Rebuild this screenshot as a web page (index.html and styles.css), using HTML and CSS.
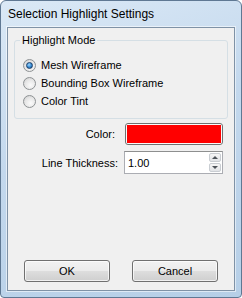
FILE: index.html
```html
<!DOCTYPE html>
<html>
<head>
<meta charset="utf-8">
<title>Selection Highlight Settings</title>
<link rel="stylesheet" href="styles.css">
</head>
<body>

<div class="window">
  <div class="titlebar">Selection Highlight Settings</div>

  <div class="client">

    <fieldset class="group">
      <legend>Highlight Mode</legend>
      <label class="option"><span class="radio checked"></span>Mesh Wireframe</label>
      <label class="option"><span class="radio"></span>Bounding Box Wireframe</label>
      <label class="option"><span class="radio"></span>Color Tint</label>
    </fieldset>

    <div class="fields">
      <span class="label lbl-color">Color:</span>
      <span class="swatch"><span class="fill"></span></span>

      <span class="label">Line Thickness:</span>
      <div class="spin">
        <span class="value">1.00</span>
        <span class="arrows">
          <span class="arrow up"></span>
          <span class="arrow down"></span>
        </span>
      </div>
    </div>

    <div class="buttons">
      <button class="btn">OK</button>
      <button class="btn">Cancel</button>
    </div>

  </div>
</div>

</body>
</html>
```

FILE: styles.css
```css
body { margin: 0; font: 11px "Liberation Sans", Arial, sans-serif; color: #000; background: #fff; }

.window {
  width: 242px; height: 298px; box-sizing: border-box;
  display: flex; flex-direction: column;
  border: 1px solid #5f7893; border-radius: 6px 6px 4px 4px;
  background: linear-gradient(160deg, #dbe9f6 0%, #c3d8ed 45%, #b6cfe7 100%);
}

.titlebar {
  height: 26px; line-height: 26px; padding-left: 7px;
  font-size: 12px; color: #000;
}

.client {
  flex: 1; display: flex; flex-direction: column;
  margin: 0 6px 6px 6px;
  border: 1px solid #7f92a6;
  box-shadow: 0 0 0 1px rgba(255,255,255,0.55);
  background: #f0f0f0;
  padding: 6px 6px 8px 6px;
}

/* group box */
.group {
  margin: 0; padding: 9px 0 8px 8px;
  border: 1px solid #d5dfe5; border-radius: 3px;
}
.group legend { margin-left: -3px; padding: 0 2px; line-height: 13px; }

.option { display: flex; align-items: center; height: 18px; gap: 5px; }

.radio {
  width: 11px; height: 11px; border-radius: 50%;
  border: 1px solid #8e9294;
  background: radial-gradient(circle at 60% 65%, #fbfbfb 0%, #e6e6e6 55%, #c9c9c9 100%);
  display: flex; align-items: center; justify-content: center;
}
.radio.checked::after {
  content: ''; width: 5px; height: 5px; border-radius: 50%;
  border: 1px solid #1b3f6a;
  background: radial-gradient(circle at 40% 35%, #9fd6ff 0%, #3a8fd6 50%, #184a82 100%);
}

/* fields */
.fields {
  margin-top: 4px;
  display: grid; grid-template-columns: 104px 99px; column-gap: 6px; row-gap: 6px;
  align-items: center;
}
.label { text-align: right; }
.lbl-color { padding-right: 3px; }

.swatch {
  margin-left: 1px; height: 22px; box-sizing: border-box;
  border: 1px solid #707070; border-radius: 3px;
  padding: 1px; background: #fafafa;
  display: flex;
}
.swatch .fill { flex: 1; background: #ff0000; }

.spin {
  height: 23px; box-sizing: border-box;
  border: 1px solid #abadb3; border-top-color: #8e8f8f;
  background: #fff;
  display: flex; align-items: center; justify-content: space-between;
  padding: 1px 1px 1px 3px;
}
.spin .value { padding-top: 1px; }
.arrows { display: flex; flex-direction: column; gap: 1px; align-self: stretch; width: 12px; }
.arrow {
  flex: 1; border: 1px solid #c9cdd2; border-radius: 2px;
  background: linear-gradient(#f6f6f6, #e1e3e6);
  display: flex; align-items: center; justify-content: center;
}
.arrow::after { content: ''; border-left: 3px solid transparent; border-right: 3px solid transparent; }
.arrow.up::after { border-bottom: 3px solid #4d5359; }
.arrow.down::after { border-top: 3px solid #4d5359; }

/* buttons */
.buttons { margin-top: auto; display: flex; gap: 22px; padding-left: 10px; }
.btn {
  width: 86px; height: 22px; padding: 0;
  font: 11px "Liberation Sans", Arial, sans-serif; color: #000;
  border: 1px solid #707070; border-radius: 3px;
  background: linear-gradient(#f2f2f2 0%, #ebebeb 48%, #dddddd 52%, #cfcfcf 100%);
  box-shadow: inset 0 0 0 1px rgba(255,255,255,0.7);
}
```
